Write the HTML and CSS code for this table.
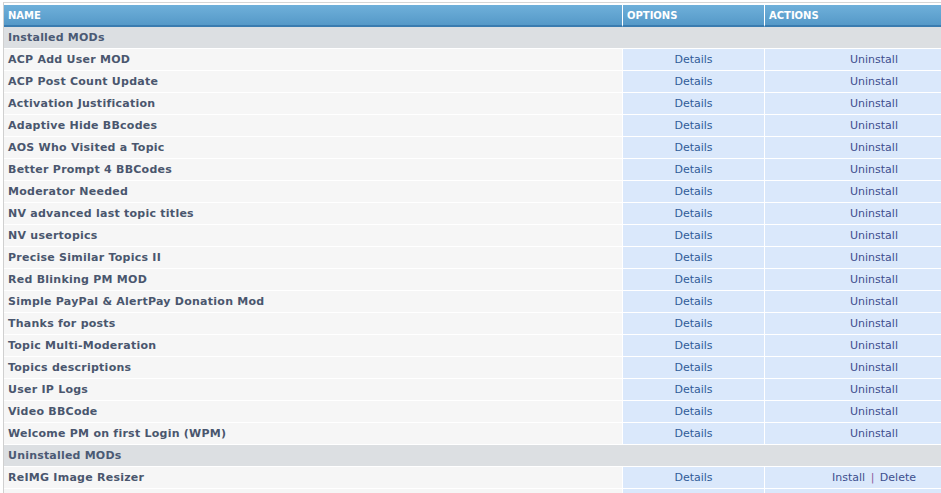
FILE: index.html
```html
<!DOCTYPE html>
<html>
<head>
<meta charset="utf-8">
<link rel="stylesheet" href="styles.css">
</head>
<body>
<div class="wrap">
<table class="mods">
<colgroup><col class="c-name"><col class="c-opt"><col class="c-act"></colgroup>
<thead>
<tr><th>NAME</th><th>OPTIONS</th><th>ACTIONS</th></tr>
</thead>
<tbody>
<tr class="group"><td colspan="3">Installed MODs</td></tr>
<tr><td class="name">ACP Add User MOD</td><td class="opt"><a>Details</a></td><td class="act"><a>Uninstall</a></td></tr>
<tr><td class="name">ACP Post Count Update</td><td class="opt"><a>Details</a></td><td class="act"><a>Uninstall</a></td></tr>
<tr><td class="name">Activation Justification</td><td class="opt"><a>Details</a></td><td class="act"><a>Uninstall</a></td></tr>
<tr><td class="name">Adaptive Hide BBcodes</td><td class="opt"><a>Details</a></td><td class="act"><a>Uninstall</a></td></tr>
<tr><td class="name">AOS Who Visited a Topic</td><td class="opt"><a>Details</a></td><td class="act"><a>Uninstall</a></td></tr>
<tr><td class="name">Better Prompt 4 BBCodes</td><td class="opt"><a>Details</a></td><td class="act"><a>Uninstall</a></td></tr>
<tr><td class="name">Moderator Needed</td><td class="opt"><a>Details</a></td><td class="act"><a>Uninstall</a></td></tr>
<tr><td class="name">NV advanced last topic titles</td><td class="opt"><a>Details</a></td><td class="act"><a>Uninstall</a></td></tr>
<tr><td class="name">NV usertopics</td><td class="opt"><a>Details</a></td><td class="act"><a>Uninstall</a></td></tr>
<tr><td class="name">Precise Similar Topics II</td><td class="opt"><a>Details</a></td><td class="act"><a>Uninstall</a></td></tr>
<tr><td class="name">Red Blinking PM MOD</td><td class="opt"><a>Details</a></td><td class="act"><a>Uninstall</a></td></tr>
<tr><td class="name">Simple PayPal &amp; AlertPay Donation Mod</td><td class="opt"><a>Details</a></td><td class="act"><a>Uninstall</a></td></tr>
<tr><td class="name">Thanks for posts</td><td class="opt"><a>Details</a></td><td class="act"><a>Uninstall</a></td></tr>
<tr><td class="name">Topic Multi-Moderation</td><td class="opt"><a>Details</a></td><td class="act"><a>Uninstall</a></td></tr>
<tr><td class="name">Topics descriptions</td><td class="opt"><a>Details</a></td><td class="act"><a>Uninstall</a></td></tr>
<tr><td class="name">User IP Logs</td><td class="opt"><a>Details</a></td><td class="act"><a>Uninstall</a></td></tr>
<tr><td class="name">Video BBCode</td><td class="opt"><a>Details</a></td><td class="act"><a>Uninstall</a></td></tr>
<tr><td class="name">Welcome PM on first Login (WPM)</td><td class="opt"><a>Details</a></td><td class="act"><a>Uninstall</a></td></tr>
<tr class="group"><td colspan="3">Uninstalled MODs</td></tr>
<tr><td class="name">ReIMG Image Resizer</td><td class="opt"><a>Details</a></td><td class="act"><a>Install</a> <span class="sep">|</span> <a>Delete</a></td></tr>
<tr><td class="name">&nbsp;</td><td class="opt">&nbsp;</td><td class="act">&nbsp;</td></tr>
</tbody>
</table>
</div>
</body>
</html>
```
FILE: styles.css
```css
html, body {
  margin: 0;
  padding: 0;
  background: #ffffff;
  overflow: hidden;
}
.wrap {
  margin: 2px 0 0 3px;
  padding-top: 2px;
  border-top: 1px solid #d6d6d6;
  border-left: 1px solid #d0d0d0;
  overflow: hidden;
}
.mods {
  border-collapse: separate;
  border-spacing: 0;
  width: 980px;
  table-layout: fixed;
  font-family: "DejaVu Sans", Verdana, sans-serif;
  font-size: 11px;
}
.c-name { width: 619px; }
.c-opt { width: 142px; }
.c-act { width: 219px; }
.mods th {
  height: 22px;
  padding: 2px 0 0 4px;
  text-align: left;
  font-size: 10px;
  font-weight: bold;
  color: #ffffff;
  background: linear-gradient(#6fb0da, #5599c8);
  border-bottom: 2px solid #3a7cb0;
  border-right: 1px solid #ffffff;
  box-sizing: border-box;
  vertical-align: middle;
  line-height: 18px;
}
.mods th:last-child { border-right: none; }
.mods td {
  height: 22px;
  box-sizing: border-box;
  padding: 1px 4px 0;
  border-bottom: 1px solid #ffffff;
  border-right: 1px solid #ffffff;
  vertical-align: middle;
  line-height: 20px;
  white-space: nowrap;
}
.mods .group td {
  background: #dcdfe2;
  color: #4b5a74;
  font-weight: bold;
  border-right: none;
  letter-spacing: 0.2px;
}
.name {
  background: #f6f6f6;
  color: #4a566e;
  font-weight: bold;
  letter-spacing: 0.25px;
}
.opt, .act {
  background: #dae8fb;
  text-align: center;
}
.opt a, .act a {
  color: #305c98;
  text-decoration: none;
}
.act a { color: #3d4f8e; }
.sep { color: #8c5a9c; margin: 0 2px; }
```
